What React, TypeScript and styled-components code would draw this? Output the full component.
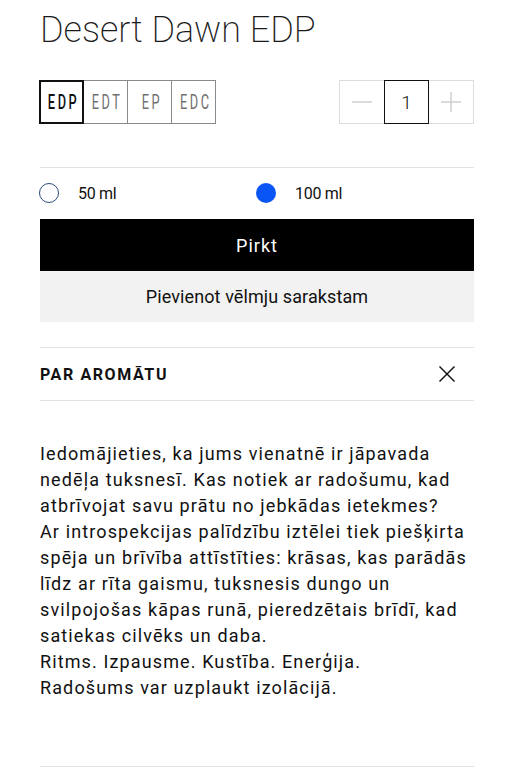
import React, { useState } from 'react';
import styled, { createGlobalStyle } from 'styled-components';

const GlobalStyle = createGlobalStyle`
  body {
    margin: 0;
    background: #fff;
    font-family: Roboto, "Noto Sans", sans-serif;
    color: #111;
  }
`;

const Page = styled.div`
  padding: 0 40px;
`;

const Title = styled.h1`
  margin: 8px 0 0;
  font-size: 36px;
  line-height: 44px;
  font-weight: 200;
  color: #1a1a1a;
`;

const OptionsRow = styled.div`
  display: flex;
  justify-content: space-between;
  align-items: center;
  margin-top: 28px;
`;

const FormatGroup = styled.div`
  display: flex;
  margin-left: -1px;
`;

const FormatButton = styled.button<{ $active?: boolean }>`
  width: 45px;
  height: 44px;
  margin-left: -1px;
  display: flex;
  align-items: center;
  justify-content: center;
  background: #fff;
  border: ${(p) => (p.$active ? '2px solid #111' : '1.5px solid #8a8a8a')};
  position: relative;
  z-index: ${(p) => (p.$active ? 1 : 0)};
  padding: 0;
  overflow: hidden;
  cursor: pointer;
  &:first-child {
    margin-left: 0;
  }
`;

const FormatLabel = styled.span<{ $active?: boolean }>`
  display: inline-block;
  font-family: Roboto, sans-serif;
  font-size: 20px;
  font-weight: ${(p) => (p.$active ? 500 : 400)};
  letter-spacing: 4px;
  margin-right: -4px;
  color: ${(p) => (p.$active ? '#111' : '#707070')};
  transform: scaleX(0.64);
  white-space: nowrap;
`;

const Stepper = styled.div`
  display: flex;
  border: 1px solid #ddd;
`;

const StepButton = styled.button`
  width: 44px;
  height: 42px;
  border: none;
  background: #fff;
  display: flex;
  align-items: center;
  justify-content: center;
  padding: 0;
  cursor: pointer;
`;

const QtyBox = styled.div`
  width: 43px;
  height: 42px;
  margin: -1px 0;
  border: 1.5px solid #111;
  display: flex;
  align-items: center;
  justify-content: center;
  font-size: 19px;
  font-weight: 300;
  color: #111;
`;

const Divider = styled.hr<{ $top: number }>`
  border: none;
  border-top: 1px solid #e3e3e3;
  margin: ${(p) => p.$top}px 0 0;
`;

const SizeRow = styled.div`
  display: grid;
  grid-template-columns: 1fr 1fr;
  margin-top: 15px;
`;

const SizeOption = styled.label`
  display: flex;
  align-items: center;
  gap: 19px;
  height: 20px;
  font-size: 16px;
  letter-spacing: -0.3px;
  color: #111;
  cursor: pointer;
`;

const RadioDot = styled.span<{ $checked?: boolean }>`
  width: 20px;
  height: 20px;
  box-sizing: border-box;
  border-radius: 50%;
  margin-left: -1px;
  border: ${(p) => (p.$checked ? 'none' : '1.3px solid #2d4b78')};
  background: ${(p) => (p.$checked ? '#0a55f5' : '#fff')};
`;

const ButtonStack = styled.div`
  display: flex;
  flex-direction: column;
  margin-top: 16px;
`;

const ActionButton = styled.button<{ $primary?: boolean }>`
  height: ${(p) => (p.$primary ? 52 : 51)}px;
  border: none;
  background: ${(p) => (p.$primary ? '#000' : '#f2f2f2')};
  color: ${(p) => (p.$primary ? '#fff' : '#111')};
  font-family: Roboto, sans-serif;
  font-size: 18px;
  letter-spacing: ${(p) => (p.$primary ? 1 : 0.1)}px;
  cursor: pointer;
`;

const AccordionHeader = styled.div`
  display: flex;
  align-items: center;
  justify-content: space-between;
  height: 52px;
  border-bottom: 1px solid #e3e3e3;
  padding-right: 19px;
`;

const AccordionTitle = styled.h2`
  margin: 0;
  font-size: 16px;
  font-weight: 700;
  letter-spacing: 1.6px;
  color: #111;
`;

const CloseButton = styled.button`
  border: none;
  background: none;
  padding: 0;
  display: flex;
  cursor: pointer;
`;

const Description = styled.p`
  margin: 40px 0 0;
  font-size: 18px;
  line-height: 26px;
  letter-spacing: 1.12px;
  color: #111;
`;

const formats = ['EDP', 'EDT', 'EP', 'EDC'];
const sizes = ['50 ml', '100 ml'];

export default function App() {
  const [format, setFormat] = useState('EDP');
  const [size, setSize] = useState('100 ml');
  const [qty, setQty] = useState(1);

  return (
    <Page>
      <GlobalStyle />
      <Title>Desert Dawn EDP</Title>

      <OptionsRow>
        <FormatGroup>
          {formats.map((f) => (
            <FormatButton key={f} $active={f === format} onClick={() => setFormat(f)}>
              <FormatLabel $active={f === format}>{f}</FormatLabel>
            </FormatButton>
          ))}
        </FormatGroup>

        <Stepper>
          <StepButton onClick={() => setQty(Math.max(1, qty - 1))} aria-label="minus">
            <svg width="20" height="20" viewBox="0 0 20 20">
              <line x1="0" y1="10" x2="20" y2="10" stroke="#c8c8c8" strokeWidth="1.3" />
            </svg>
          </StepButton>
          <QtyBox>{qty}</QtyBox>
          <StepButton onClick={() => setQty(qty + 1)} aria-label="plus">
            <svg width="20" height="20" viewBox="0 0 20 20">
              <line x1="0" y1="10" x2="20" y2="10" stroke="#c8c8c8" strokeWidth="1.3" />
              <line x1="10" y1="0" x2="10" y2="20" stroke="#c8c8c8" strokeWidth="1.3" />
            </svg>
          </StepButton>
        </Stepper>
      </OptionsRow>

      <Divider $top={43} />

      <SizeRow>
        {sizes.map((s) => (
          <SizeOption key={s} onClick={() => setSize(s)}>
            <RadioDot $checked={s === size} />
            {s}
          </SizeOption>
        ))}
      </SizeRow>

      <ButtonStack>
        <ActionButton $primary>Pirkt</ActionButton>
        <ActionButton>Pievienot vēlmju sarakstam</ActionButton>
      </ButtonStack>

      <Divider $top={25} />

      <AccordionHeader>
        <AccordionTitle>PAR AROMĀTU</AccordionTitle>
        <CloseButton aria-label="close">
          <svg width="16" height="16" viewBox="0 0 16 16">
            <line x1="0.5" y1="0.5" x2="15.5" y2="15.5" stroke="#111" strokeWidth="1.4" />
            <line x1="15.5" y1="0.5" x2="0.5" y2="15.5" stroke="#111" strokeWidth="1.4" />
          </svg>
        </CloseButton>
      </AccordionHeader>

      <Description>
        Iedomājieties, ka jums vienatnē ir jāpavada nedēļa tuksnesī. Kas notiek ar radošumu, kad
        atbrīvojat savu prātu no jebkādas ietekmes?
        <br />
        Ar introspekcijas palīdzību iztēlei tiek piešķirta spēja un brīvība attīstīties: krāsas,
        kas parādās līdz ar rīta gaismu, tuksnesis dungo un svilpojošas kāpas runā, pieredzētais
        brīdī, kad satiekas cilvēks un daba.
        <br />
        Ritms. Izpausme. Kustība. Enerģija.
        <br />
        Radošums var uzplaukt izolācijā.
      </Description>

      <Divider $top={65} />
    </Page>
  );
}
